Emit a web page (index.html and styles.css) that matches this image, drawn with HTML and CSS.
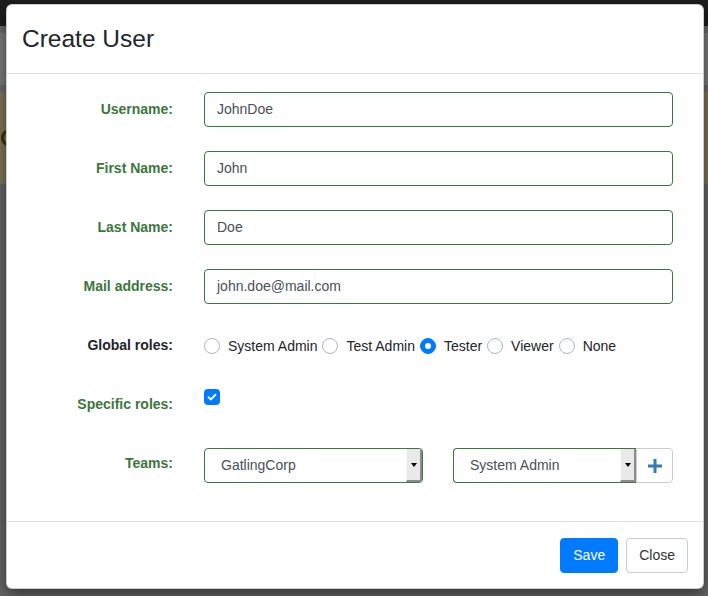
FILE: index.html
```html
<!DOCTYPE html>
<html>
<head>
<meta charset="utf-8">
<link rel="stylesheet" href="styles.css">
</head>
<body>
<div class="page">
  <div class="nav"></div>
  <div class="band"></div>
  <div class="alert"><span class="alert-mark"></span></div>
  <div class="rest"></div>
</div>

<div class="modal">
  <div class="modal-header">
    <h4 class="modal-title">Create User</h4>
  </div>
  <div class="modal-body">
    <div class="form-row">
      <label class="lbl">Username:</label>
      <div class="input">JohnDoe</div>
    </div>
    <div class="form-row">
      <label class="lbl">First Name:</label>
      <div class="input">John</div>
    </div>
    <div class="form-row">
      <label class="lbl">Last Name:</label>
      <div class="input">Doe</div>
    </div>
    <div class="form-row">
      <label class="lbl">Mail address:</label>
      <div class="input">john.doe@mail.com</div>
    </div>
    <div class="form-row">
      <label class="lbl lbl-plain">Global roles:</label>
      <div class="radios">
        <span class="radio"><span class="circle"></span>System Admin</span>
        <span class="radio"><span class="circle"></span>Test Admin</span>
        <span class="radio"><span class="circle checked"></span>Tester</span>
        <span class="radio"><span class="circle"></span>Viewer</span>
        <span class="radio"><span class="circle"></span>None</span>
      </div>
    </div>
    <div class="form-row">
      <label class="lbl">Specific roles:</label>
      <div class="check-wrap">
        <span class="checkbox">
          <svg width="16" height="16" viewBox="0 0 16 16"><path d="M4.6 8.2 L7 10.4 L11.4 5.8" fill="none" stroke="#fff" stroke-width="2" stroke-linecap="round" stroke-linejoin="round"/></svg>
        </span>
      </div>
    </div>
    <div class="form-row row-teams">
      <label class="lbl">Teams:</label>
      <div class="teams">
        <div class="select select-team">
          <span class="select-value">GatlingCorp</span>
          <span class="select-arrow"><span class="tri"></span></span>
        </div>
        <div class="role-group">
          <div class="select select-role">
            <span class="select-value">System Admin</span>
            <span class="select-arrow"><span class="tri"></span></span>
          </div>
          <button class="add-btn">
            <svg width="14" height="14" viewBox="0 0 14 14"><rect x="5.5" y="0" width="3" height="14" fill="#337ab7"/><rect x="0" y="5.5" width="14" height="3" fill="#337ab7"/></svg>
          </button>
        </div>
      </div>
    </div>
  </div>
  <div class="modal-footer">
    <button class="btn btn-primary">Save</button>
    <button class="btn btn-default">Close</button>
  </div>
</div>
</body>
</html>
```

FILE: styles.css
```css
html, body {
  margin: 0;
  padding: 0;
}
body {
  width: 708px;
  height: 596px;
  overflow: hidden;
  position: relative;
  font-family: "Liberation Sans", Arial, sans-serif;
  font-size: 14px;
  line-height: 1.5;
  background: #656565;
}

/* background page seen through backdrop */
.page {
  display: flex;
  flex-direction: column;
}
.nav {
  height: 26px;
  background: #1e1e1e;
}
.band {
  height: 52px;
  background: #7b7b7b;
  border-top: 7px solid #6b6b6b;
  border-bottom: 7px solid #6b6b6b;
}
.alert {
  height: 92px;
  background: #7c7559;
  overflow: hidden;
}
.alert-mark {
  display: block;
  box-sizing: border-box;
  width: 18px;
  height: 18px;
  margin-left: 1px;
  margin-top: 37px;
  border-radius: 50%;
  border: 3px solid #3d3000;
}
.rest {
  height: 400px;
  background: #656565;
}

/* modal */
.modal {
  position: absolute;
  left: 6px;
  top: 4px;
  width: 698px;
  height: 585px;
  box-sizing: border-box;
  background: #fff;
  border: 1px solid rgba(0, 0, 0, 0.2);
  border-radius: 6px;
  box-shadow: 0 5px 15px rgba(0, 0, 0, 0.5);
  display: flex;
  flex-direction: column;
  color: #212529;
}
.modal-header {
  padding: 16px 15px 16px;
  border-bottom: 1px solid #dee2e6;
}
.modal-title {
  margin: 0;
  font-size: 24.5px;
  font-weight: 500;
  line-height: 36px;
  color: #212529;
}
.modal-body {
  flex: 1;
  padding: 18px 15px 0;
  display: flex;
  flex-direction: column;
  gap: 24px;
}
.form-row {
  display: grid;
  grid-template-columns: 151px 469px;
  column-gap: 31px;
  height: 35px;
}
.lbl {
  text-align: right;
  font-weight: bold;
  color: #3c763d;
  padding-top: 7px;
  line-height: 21px;
}
.lbl-plain {
  color: #212529;
}
.input {
  box-sizing: border-box;
  height: 35px;
  border: 1px solid #3c763d;
  border-radius: 4px;
  padding: 6px 12px;
  line-height: 21px;
  color: #495057;
}

/* radios */
.radios {
  display: flex;
  align-items: center;
  color: #212529;
  padding-top: 1px;
}
.radio {
  display: flex;
  align-items: center;
  margin-right: 5px;
  line-height: 21px;
}
.circle {
  box-sizing: border-box;
  width: 16px;
  height: 16px;
  border-radius: 50%;
  border: 1px solid #adb5bd;
  background: #fff;
  margin-right: 8px;
  position: relative;
}
.circle.checked {
  background: #007bff;
  border-color: #007bff;
}
.circle.checked::after {
  content: "";
  position: absolute;
  left: 4px;
  top: 4px;
  width: 6px;
  height: 6px;
  border-radius: 50%;
  background: #fff;
}

/* checkbox */
.check-wrap {
  padding-top: 2px;
}
.checkbox {
  display: block;
  width: 16px;
  height: 16px;
  border-radius: 4px;
  background: #007bff;
}
.checkbox svg {
  display: block;
}

/* teams */
.row-teams .teams {
  display: flex;
  gap: 30px;
  margin-top: 2px;
}
.select {
  box-sizing: border-box;
  height: 35px;
  display: flex;
  border: 1px solid #3c763d;
  color: #495057;
}
.select-team {
  width: 219px;
  border-radius: 4px;
}
.select-role {
  width: 183px;
  border-radius: 4px 0 0 4px;
  border-right: 0;
}
.select-value {
  flex: 1;
  padding: 6px 0 6px 16px;
  line-height: 21px;
}
.select-arrow {
  box-sizing: border-box;
  width: 16px;
  background: #e9e9e9;
  border-left: 1px solid #f8f8f8;
  border-right: 2px solid #8c8c8c;
  border-bottom: 2px solid #8c8c8c;
  display: flex;
  align-items: center;
  justify-content: center;
}
.tri {
  width: 0;
  height: 0;
  border-top: 4px solid #000;
  border-left: 3px solid transparent;
  border-right: 3px solid transparent;
}
.role-group {
  display: flex;
}
.add-btn {
  box-sizing: border-box;
  width: 37px;
  height: 35px;
  padding: 0;
  border: 1px solid #ccc;
  border-radius: 0 4px 4px 0;
  background: #fff;
  display: flex;
  align-items: center;
  justify-content: center;
}

/* footer */
.modal-footer {
  border-top: 1px solid #dee2e6;
  padding: 16px 15px 15px;
  display: flex;
  justify-content: flex-end;
  gap: 8px;
}
.btn {
  box-sizing: border-box;
  height: 35px;
  padding: 6px 12px;
  font-family: "Liberation Sans", Arial, sans-serif;
  font-size: 14px;
  line-height: 21px;
  border-radius: 4px;
  border: 1px solid transparent;
}
.btn-primary {
  background: #007bff;
  border-color: #007bff;
  color: #fff;
}
.btn-default {
  background: #fff;
  border-color: #ccc;
  color: #333;
}
```
